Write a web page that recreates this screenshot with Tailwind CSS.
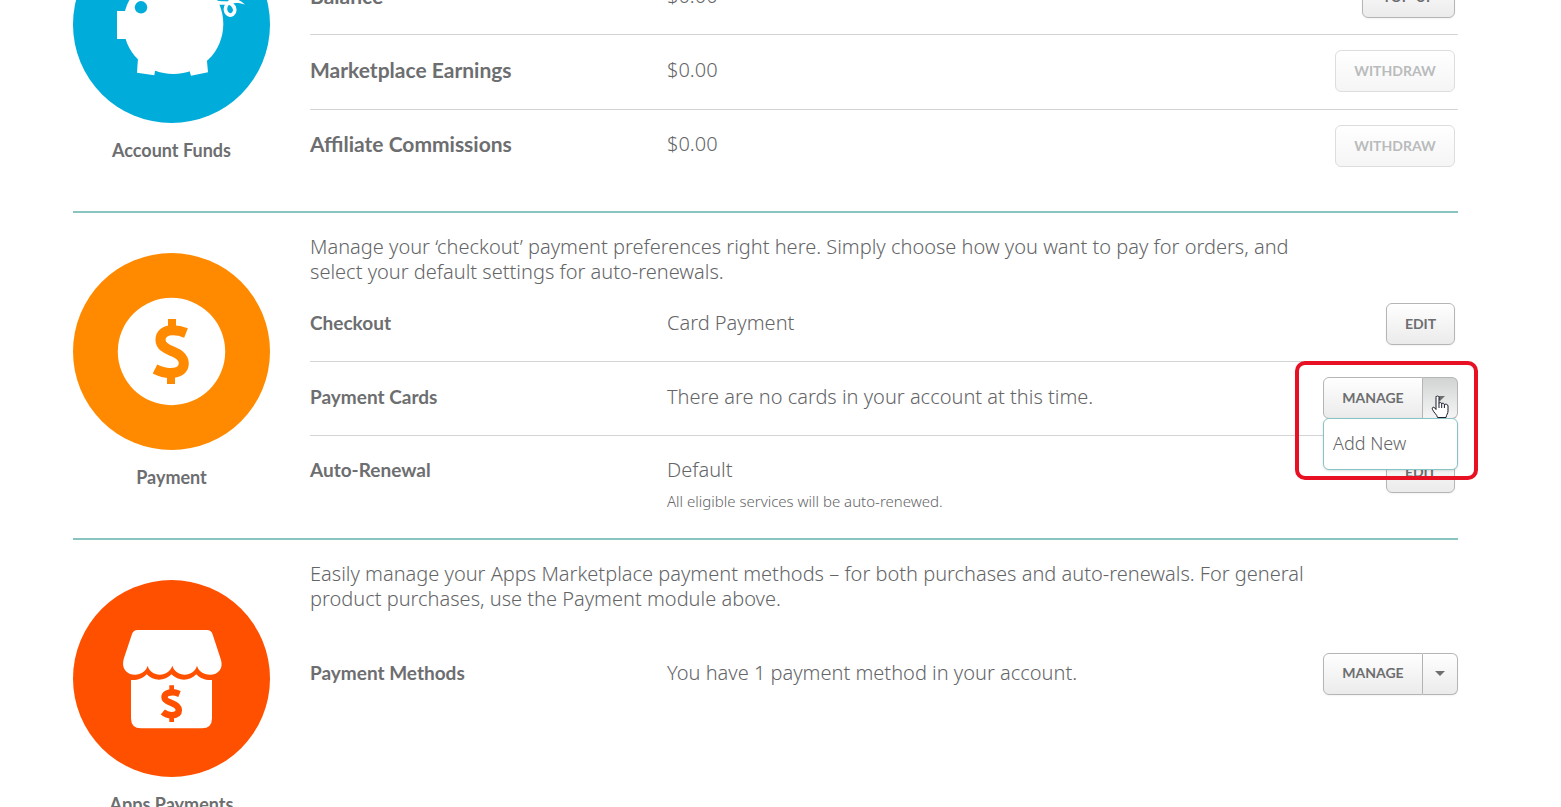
<!DOCTYPE html>
<html lang="en">
<head>
<meta charset="utf-8">
<title>Billing</title>
<script src="https://cdn.jsdelivr.net/npm/@tailwindcss/browser@4"></script>
</head>
<body class="h-screen overflow-hidden bg-white font-['Noto_Sans','Open_Sans',sans-serif] font-light text-[20px] leading-[25px] text-[#646567]">
<main class="-mt-[114px] pl-[73px] pr-[103px]">

  <!-- Account funds -->
  <section class="flex min-h-[327px] gap-10 border-b-2 border-[#89c4bf]">
    <div class="w-[197px] shrink-0 pt-10 text-center">
      <svg viewBox="0 0 197 197" class="block w-full" aria-hidden="true">
        <circle cx="98.500" cy="98.500" r="98.500" fill="#00acd9"/>
        <g fill="#fff">
          <circle cx="100.300" cy="98" r="50"/>
          <path d="M44 85H56V113H44Z"/>
          <path d="M65 132L64 146.700L81.300 149.300L83 140Z"/>
          <path d="M133.700 132L135 146.300L118 149.700L115 140Z"/>
        </g>
        <circle cx="68" cy="81.300" r="6.200" fill="#00acd9"/>
        <path d="M144 76.500C150 78 156 75.500 159 78.500C162 81 162.800 85.500 160 88C157 90.500 153 88 152.500 84C152 80 155 76 160 74" fill="none" stroke="#fff" stroke-width="3.600"/>
        <path d="M156 71C163 72.500 168 74.500 172 78.500C168 77 163 76.500 158 77.500Z" fill="#fff"/>
      </svg>
      <h2 class="mt-[17px] font-['Lato',sans-serif] text-[18px] leading-5 font-bold text-[#6d6e70]">Account Funds</h2>
    </div>
    <div class="min-w-0 flex-1 pt-[75px]">
      <div class="grid grid-cols-[357px_1fr_auto] items-center border-b border-[#d3d4d4] pt-[15px] pb-4">
        <h3 class="pb-1 font-['Lato',sans-serif] text-[21px] font-bold text-[#6d6e70]">Balance</h3>
        <div class="pb-1">$0.00</div>
        <button type="button" class="mr-[3px] h-[42px] w-[93px] rounded-md border border-[#b4b6b6] bg-linear-to-b from-white to-[#ebebeb] font-['Lato',sans-serif] text-sm font-bold text-[#6d6e70] shadow-xs">TOP-UP</button>
      </div>
      <div class="grid grid-cols-[357px_1fr_auto] items-center border-b border-[#d3d4d4] pt-[15px] pb-[17px]">
        <h3 class="pb-1 font-['Lato',sans-serif] text-[21px] font-bold text-[#6d6e70]">Marketplace Earnings</h3>
        <div class="pb-1">$0.00</div>
        <button type="button" disabled class="mr-[3px] h-[42px] w-[120px] rounded-md border border-[#dcdddd] bg-linear-to-b from-white to-[#f5f5f5] font-['Lato',sans-serif] text-sm font-bold text-[#b9bbbc]">WITHDRAW</button>
      </div>
      <div class="grid grid-cols-[357px_1fr_auto] items-center pt-[15px]">
        <h3 class="pb-1.5 font-['Lato',sans-serif] text-[21px] font-bold text-[#6d6e70]">Affiliate Commissions</h3>
        <div class="pb-1.5">$0.00</div>
        <button type="button" disabled class="mr-[3px] h-[42px] w-[120px] rounded-md border border-[#dcdddd] bg-linear-to-b from-white to-[#f5f5f5] font-['Lato',sans-serif] text-sm font-bold text-[#b9bbbc]">WITHDRAW</button>
      </div>
    </div>
  </section>

  <!-- Payment -->
  <section class="flex min-h-[327px] gap-10 border-b-2 border-[#89c4bf]">
    <div class="w-[197px] shrink-0 pt-10 text-center">
      <svg viewBox="0 0 197 197" class="block w-full" aria-hidden="true">
        <circle cx="98.500" cy="98.500" r="98.500" fill="#ff8a00"/>
        <circle cx="98.500" cy="98.500" r="53.700" fill="#fff"/>
        <path d="M95 66H103V76H95ZM94 122H102V131H94Z" fill="#ff8a00"/>
        <path d="M113 80C108 78 104 77.300 100 77.300C92 77.300 87.500 80.500 87.500 87C87.500 93.500 94 96 99 98.200C105 100.800 110.800 103.500 110.800 110.500C110.800 117 105 120 97 120C91.500 120 86.500 118.300 82 116" fill="none" stroke="#ff8a00" stroke-width="10"/>
      </svg>
      <h2 class="mt-[17px] font-['Lato',sans-serif] text-[18px] leading-5 font-bold text-[#6d6e70]">Payment</h2>
    </div>
    <div class="min-w-0 flex-1 pt-[21px]">
      <p class="mb-1 max-w-[1010px]">Manage your ‘checkout’ payment preferences right here. Simply choose how you want to pay for orders, and select your default settings for auto-renewals.</p>
      <div class="grid grid-cols-[357px_1fr_auto] items-center border-b border-[#d3d4d4] pt-[15px] pb-4">
        <h3 class="pb-[3px] font-['Lato',sans-serif] text-[19px] font-bold text-[#6d6e70]">Checkout</h3>
        <div class="pb-[3px]">Card Payment</div>
        <button type="button" class="mr-[3px] h-[42px] w-[69px] rounded-md border border-[#b4b6b6] bg-linear-to-b from-white to-[#ebebeb] font-['Lato',sans-serif] text-sm font-bold text-[#6d6e70] shadow-xs">EDIT</button>
      </div>
      <div class="grid grid-cols-[357px_1fr_auto] items-center border-b border-[#d3d4d4] pt-[15px] pb-4">
        <h3 class="pb-[3px] font-['Lato',sans-serif] text-[19px] font-bold text-[#6d6e70]">Payment Cards</h3>
        <div class="pb-[3px]">There are no cards in your account at this time.</div>
        <div class="relative flex h-[42px] text-[#6d6e70]">
          <button type="button" class="w-[100px] rounded-l-md border border-[#b4b6b6] bg-linear-to-b from-white to-[#ebebeb] font-['Lato',sans-serif] text-sm font-bold">MANAGE</button>
          <button type="button" aria-label="More card actions" aria-expanded="true" class="flex w-[35px] items-center justify-center rounded-r-md border border-l-0 border-[#b4b6b6] bg-linear-to-b from-[#d2d4d4] to-[#f5f5f5]">
            <svg viewBox="0 0 10 5" class="h-[5px] w-2.5" aria-hidden="true"><path d="M0 0H10L5 5Z" fill="#6d6e70"/></svg>
          </button>
          <div role="menu" class="absolute top-[41px] left-0 z-10 w-full rounded-md border border-[#89c4c4] bg-white px-[9px] pt-3 pb-[13px] text-[18px] text-[#646567] shadow-sm">
            <a href="#" role="menuitem" class="block">Add New</a>
          </div>
          <!-- highlight frame and hand pointer -->
          <div class="pointer-events-none absolute -top-4 -left-7 z-20 h-[119px] w-[183px] rounded-[10px] border-4 border-[#e81123]"></div>
          <svg viewBox="0 0 18 24" class="pointer-events-none absolute top-[18px] left-[108px] z-30 h-6 w-[18px]" aria-hidden="true">
            <path d="M5 2.500C5 .5 8 .5 8 2.500V8.500C8.200 7 10.700 7.200 10.700 9C11 7.700 13.400 8 13.400 9.800C13.800 8.700 17 9 17 11V16C17 18.500 15.500 19.500 15 22.500H6.500C6 19.500 3 18 1.500 14.500C.5 12.500 2.500 11.500 3.700 12.800L5 14.500Z" fill="#fff" stroke="#1b1b2b" stroke-linejoin="round"/>
            <path d="M8 8.500V13M10.700 9V13M13.400 9.800V13" fill="none" stroke="#1b1b2b"/>
          </svg>
        </div>
      </div>
      <div class="grid grid-cols-[357px_1fr_auto] items-center pt-[15px]">
        <h3 class="pb-[5px] font-['Lato',sans-serif] text-[19px] font-bold text-[#6d6e70]">Auto-Renewal</h3>
        <div class="pb-[5px]">Default</div>
        <button type="button" class="mr-[3px] h-[42px] w-[69px] rounded-md border border-[#b4b6b6] bg-linear-to-b from-white to-[#ebebeb] font-['Lato',sans-serif] text-sm font-bold text-[#6d6e70] shadow-xs">EDIT</button>
        <p class="col-start-2 text-[15px] leading-4">All eligible services will be auto-renewed.</p>
      </div>
    </div>
  </section>

  <!-- Apps payments -->
  <section class="flex gap-10">
    <div class="w-[197px] shrink-0 pt-10 text-center">
      <svg viewBox="0 0 197 197" class="block w-full" aria-hidden="true">
        <circle cx="98.500" cy="98.500" r="98.500" fill="#ff5000"/>
        <g fill="#fff">
          <path d="M64.500 50H134Q138 50 139.500 54L147.700 79C151 89 145 94.700 137 94.700C130.500 94.700 125.500 91 124 85.700C122.500 91 117.500 94.700 111.700 94.700C106 94.700 101 91 99.300 85.700C97.500 91 92.500 94.700 87 94.700C81 94.700 76 91 74.700 85.700C73 91 68 94.700 62 94.700C54 94.700 48 89 50.700 79L59 54Q60.500 50 64.500 50Z"/>
          <path d="M58 100C64 100.500 70 98.500 73.700 94.300C80 101.500 92 101.500 98.500 94.300C105 101.500 117 101.500 123.300 94.300C127 98.500 133 100.500 139 100V138.300Q139 148.300 129 148.300H68Q58 148.300 58 138.300Z"/>
        </g>
        <path d="M96.300 105.300H101V112H96.300ZM96.300 135H101V142H96.300Z" fill="#ff5000"/>
        <path d="M106.500 114C104 113 102 112.300 99.500 112.300C95 112.300 91.500 114 91.500 117.300C91.500 120.500 95 121.800 98.500 123C102.500 124.500 105.800 126 105.800 130C105.800 133.500 103 135.200 98.500 135.200C95 135.200 92 133.800 89.800 132" fill="none" stroke="#ff5000" stroke-width="6.500"/>
      </svg>
      <h2 class="mt-[17px] font-['Lato',sans-serif] text-[18px] leading-5 font-bold text-[#6d6e70]">Apps Payments</h2>
    </div>
    <div class="min-w-0 flex-1 pt-[21px]">
      <p class="mb-[27px] max-w-[1010px]">Easily manage your Apps Marketplace payment methods – for both purchases and auto-renewals. For general product purchases, use the Payment module above.</p>
      <div class="grid grid-cols-[357px_1fr_auto] items-center pt-[15px]">
        <h3 class="pb-1 font-['Lato',sans-serif] text-[19px] font-bold text-[#6d6e70]">Payment Methods</h3>
        <div class="pb-1">You have 1 payment method in your account.</div>
        <div class="flex h-[42px] text-[#6d6e70]">
          <button type="button" class="w-[100px] rounded-l-md border border-[#b4b6b6] bg-linear-to-b from-white to-[#ebebeb] pb-0.5 font-['Lato',sans-serif] text-sm font-bold shadow-xs">MANAGE</button>
          <button type="button" aria-label="More payment method actions" class="flex w-[35px] items-center justify-center rounded-r-md border border-l-0 border-[#b4b6b6] bg-linear-to-b from-white to-[#ebebeb] pb-0.5 shadow-xs">
            <svg viewBox="0 0 10 5" class="h-[5px] w-2.5" aria-hidden="true"><path d="M0 0H10L5 5Z" fill="#6d6e70"/></svg>
          </button>
        </div>
      </div>
    </div>
  </section>
</main>
</body>
</html>
